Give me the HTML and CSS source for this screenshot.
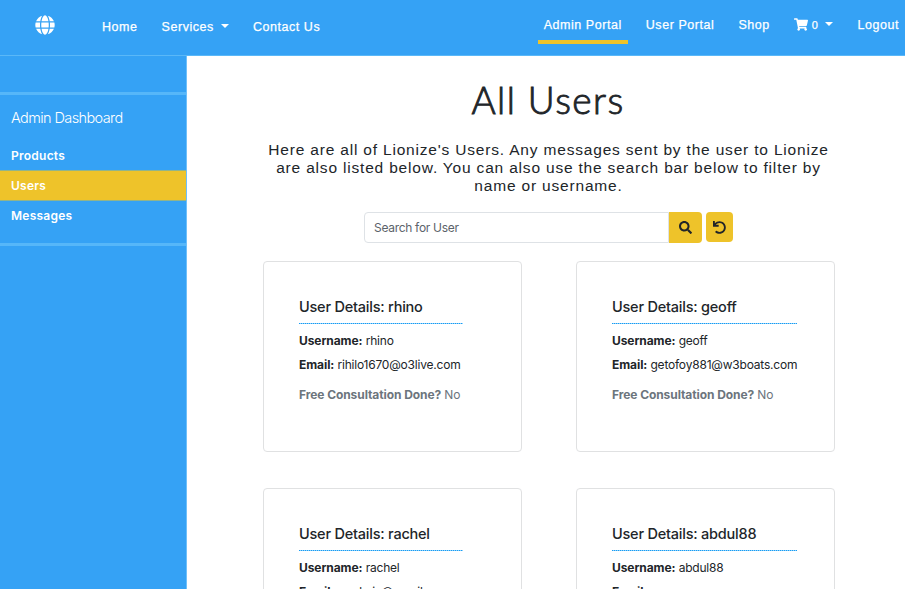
FILE: index.html
```html
<!DOCTYPE html>
<html lang="en">
<head>
<meta charset="utf-8">
<title>Lionize - All Users</title>
<link rel="stylesheet" href="styles.css">
</head>
<body>
<header class="navbar">
  <svg class="globe" viewBox="0 0 496 512" aria-hidden="true"><path fill="currentColor" d="M336.500 160C322 70.700 287.800 8 248 8s-74 62.700-88.500 152h177zM152 256c0 22.200 1.200 43.500 3.300 64h185.300c2.100-20.500 3.300-41.800 3.300-64s-1.200-43.500-3.300-64H155.300c-2.100 20.500-3.300 41.800-3.300 64zm324.700-96c-28.600-67.900-86.500-120.400-158-141.600 24.400 33.800 41.200 84.700 50 141.600h108zM177.200 18.400C105.800 39.600 47.800 92.100 19.300 160h108c8.700-56.900 25.500-107.800 49.900-141.600zM487.400 192H372.700c2.100 21 3.300 42.500 3.300 64s-1.200 43-3.300 64h114.600c5.500-20.500 8.600-41.800 8.600-64s-3.100-43.500-8.500-64zM120 256c0-21.500 1.200-43 3.300-64H8.600C3.200 212.500 0 233.800 0 256s3.200 43.500 8.600 64h114.600c-2-21-3.200-42.500-3.200-64zm39.500 96c14.500 89.300 48.700 152 88.500 152s74-62.700 88.500-152h-177zm159.300 141.600c71.400-21.200 129.400-73.700 158-141.600h-108c-8.800 56.900-25.600 107.800-50 141.600zM19.300 352c28.600 67.900 86.500 120.400 158 141.600-24.400-33.800-41.200-84.700-50-141.600h-108z"/></svg>
  <nav class="nav-main">
    <a class="nav-link">Home</a>
    <a class="nav-link">Services<i class="caret"></i></a>
    <a class="nav-link">Contact Us</a>
  </nav>
  <nav class="nav-account">
    <a class="nav-link active">Admin Portal</a>
    <a class="nav-link">User Portal</a>
    <a class="nav-link">Shop</a>
    <a class="nav-link cart"><svg viewBox="0 0 576 512" aria-hidden="true"><path fill="currentColor" d="M528.120 301.319l47.273-208C578.806 78.301 567.391 64 551.990 64H159.208l-9.166-44.810C147.758 8.021 137.930 0 126.529 0H24C10.745 0 0 10.745 0 24v16c0 13.255 10.745 24 24 24h69.883l70.248 343.435C147.325 417.100 136 435.222 136 456c0 30.928 25.072 56 56 56s56-25.072 56-56c0-15.674-6.447-29.835-16.824-40h209.647C430.447 426.165 424 440.326 424 456c0 30.928 25.072 56 56 56s56-25.072 56-56c0-22.172-12.888-41.332-31.579-50.405l5.517-24.276c3.413-15.018-8.002-29.319-23.403-29.319H218.117l-6.545-32h293.145c11.206 0 20.920-7.754 23.403-18.681z"/></svg><small>0</small><i class="caret"></i></a>
    <a class="nav-link">Logout</a>
  </nav>
</header>
<div class="layout">
  <aside class="sidebar">
    <div class="side-group">
      <h2 class="side-title">Admin Dashboard</h2>
      <a class="side-link">Products</a>
      <a class="side-link current">Users</a>
      <a class="side-link">Messages</a>
    </div>
  </aside>
  <main class="content">
    <h1 class="title">All Users</h1>
    <p class="intro">Here are all of Lionize's Users. Any messages sent by the user to Lionize<br>are also listed below. You can also use the search bar below to filter by<br>name or username.</p>
    <form class="search">
      <input class="search-input" type="text" placeholder="Search for User">
      <button class="btn btn-search" type="button" aria-label="Search"><svg viewBox="0 0 512 512"><path fill="currentColor" d="M505 442.700L405.300 343c-4.500-4.500-10.600-7-17-7H372c27.600-35.300 44-79.700 44-128C416 93.100 322.900 0 208 0S0 93.100 0 208s93.100 208 208 208c48.300 0 92.700-16.400 128-44v16.300c0 6.400 2.500 12.500 7 17l99.700 99.700c9.400 9.400 24.600 9.400 33.900 0l28.300-28.300c9.400-9.400 9.400-24.600.1-34zM208 336c-70.700 0-128-57.200-128-128 0-70.700 57.200-128 128-128 70.700 0 128 57.200 128 128 0 70.700-57.200 128-128 128z"/></svg></button>
      <button class="btn btn-reset" type="button" aria-label="Reset"><svg viewBox="0 0 512 512"><path fill="currentColor" d="M212.333 224.333H12c-6.627 0-12-5.373-12-12V12C0 5.373 5.373 0 12 0h48c6.627 0 12 5.373 12 12v78.112C117.773 39.279 184.260 7.470 258.175 8.007c136.906.994 246.448 111.623 246.157 248.532C504.041 393.258 393.120 504 256.333 504c-64.089 0-122.496-24.313-166.510-64.215-5.099-4.622-5.334-12.554-.467-17.420l33.967-33.967c4.474-4.474 11.662-4.717 16.401-.525C170.760 415.336 211.580 432 256.333 432c97.268 0 176-78.716 176-176 0-97.267-78.716-176-176-176-58.496 0-110.280 28.476-142.274 72.333h98.274c6.627 0 12 5.373 12 12v48c0 6.627-5.373 12-12 12z"/></svg></button>
    </form>
    <section class="cards">
      <article class="card">
        <div class="details"><h3>User Details: rhino</h3>
        <p><b>Username:</b> rhino</p>
        <p><b>Email:</b> rihilo1670@o3live.com</p>
        <p class="muted"><b>Free Consultation Done?</b> No</p></div>
      </article>
      <article class="card">
        <div class="details wide"><h3>User Details: geoff</h3>
        <p><b>Username:</b> geoff</p>
        <p><b>Email:</b> getofoy881@w3boats.com</p>
        <p class="muted"><b>Free Consultation Done?</b> No</p></div>
      </article>
      <article class="card">
        <div class="details"><h3>User Details: rachel</h3>
        <p><b>Username:</b> rachel</p>
        <p><b>Email:</b> raadmin@gmail.com</p></div>
      </article>
      <article class="card">
        <div class="details wide"><h3>User Details: abdul88</h3>
        <p><b>Username:</b> abdul88</p>
        <p><b>Email:</b></p></div>
      </article>
    </section>
  </main>
</div>
</body>
</html>
```
FILE: styles.css
```css
* { box-sizing: border-box; }
html, body { height: 100%; }
body {
  margin: 0;
  display: flex;
  flex-direction: column;
  overflow: hidden;
  background: #fff;
  color: #212529;
  font-family: Inter, "Liberation Sans", sans-serif;
}
h1, h2, h3, p { margin: 0; font-weight: 400; }

.navbar {
  flex: none;
  display: flex;
  height: 56px;
  padding-left: 35px;
  background: #35a2f5;
  border-bottom: 1px solid #5ab8f8;
  color: #fff;
  font: 12.500px/20px "Liberation Sans", sans-serif;
  letter-spacing: 0.55px;
  -webkit-text-stroke: 0.25px currentColor;
}
.globe { width: 20px; height: 20px; margin-top: 15px; }
.nav-main { display: flex; gap: 24px; margin: 17px 0 0 47px; }
.nav-account { display: flex; gap: 12px; margin: 15px 0 0 auto; }
.nav-account .nav-link { padding: 0 6px; height: 29px; }
.nav-link { white-space: nowrap; }
.nav-account .active { border-bottom: 4px solid #eec32a; }
.caret {
  display: inline-block;
  margin-left: 7px;
  vertical-align: 3px;
  border: 4px solid transparent;
  border-top-color: #fff;
  border-bottom: 0;
}
.cart svg { width: 14px; height: 13px; vertical-align: -2px; margin-right: 4px; }
.cart small { font-size: 11px; }

.layout { flex: 1; display: flex; min-height: 0; }
.sidebar {
  flex: none;
  width: 187px;
  padding-top: 36px;
  background: #35a2f5;
  border-right: 1px solid #6fc0fa;
  color: #fff;
}
.side-group {
  height: 154px;
  border: solid #56b7f9;
  border-width: 3px 0;
}
.side-title {
  padding: 12px 11px 0;
  height: 45px;
  font-size: 14.500px;
  line-height: 22px;
  font-weight: 300;
  letter-spacing: -0.6px;
}
.side-link {
  display: block;
  height: 30px;
  padding-left: 11px;
  font-size: 12px;
  line-height: 31px;
  font-weight: 600;
  letter-spacing: 0.25px;
}
.current { height: 31px; background: #eec32a; border: solid #91b48b; border-width: 1px 0; line-height: 29px; }
.current + .side-link { line-height: 29px; }

.content { flex: 1; min-width: 0; }
.title {
  margin-top: 22px;
  padding-left: 4px;
  text-align: center;
  font: 300 37px/44px Lato, sans-serif;
  letter-spacing: 1.450px;
  -webkit-text-stroke: 0.9px currentColor;
}
.intro {
  margin-top: 19px;
  padding-left: 5px;
  text-align: center;
  font: 15.500px/18px "Liberation Sans", sans-serif;
  letter-spacing: 0.815px;
}
.search { display: flex; height: 31px; margin: 17px 0 0 177px; }
.search-input {
  width: 305px;
  padding: 0 9px;
  border: 1px solid #dee2e6;
  border-radius: 4px 0 0 4px;
  font: 12px Inter, sans-serif;
  letter-spacing: -0.3px;
}
.search-input::placeholder { color: #5c636a; }
.btn {
  display: flex;
  align-items: center;
  justify-content: center;
  padding: 0;
  border: 0;
  background: #eec32a;
  color: #212529;
}
.btn svg { width: 13px; height: 13px; }
.btn-search { width: 33px; border-radius: 0 4px 4px 0; }
.btn-reset { width: 27px; height: 30px; margin-left: 4px; border-radius: 4px; }

.cards {
  display: grid;
  grid-template-columns: 259px 259px;
  grid-auto-rows: 191px;
  gap: 36px 54px;
  margin: 18px 0 0 76px;
}
.card {
  padding: 35px;
  border: 1px solid #e0e1e2;
  border-radius: 4px;
}
.details {
  width: 164px;
  white-space: nowrap;
  font-size: 12px;
  line-height: 18px;
  letter-spacing: -0.2px;
}
.wide { width: 185px; }
.details h3 {
  height: 27px;
  margin-bottom: 8px;
  background: repeating-linear-gradient(90deg, #179cf3 0 1px, #8fd0fa 1px 2px) left bottom / 100% 1px no-repeat;
  font-size: 14.500px;
  line-height: 20px;
  font-weight: 500;
  letter-spacing: -0.22px;
}
.details p { margin-bottom: 6px; }
.details b { font-weight: 700; letter-spacing: -0.08px; }
.details .muted { margin-top: 12px; color: #6c757d; }
```
